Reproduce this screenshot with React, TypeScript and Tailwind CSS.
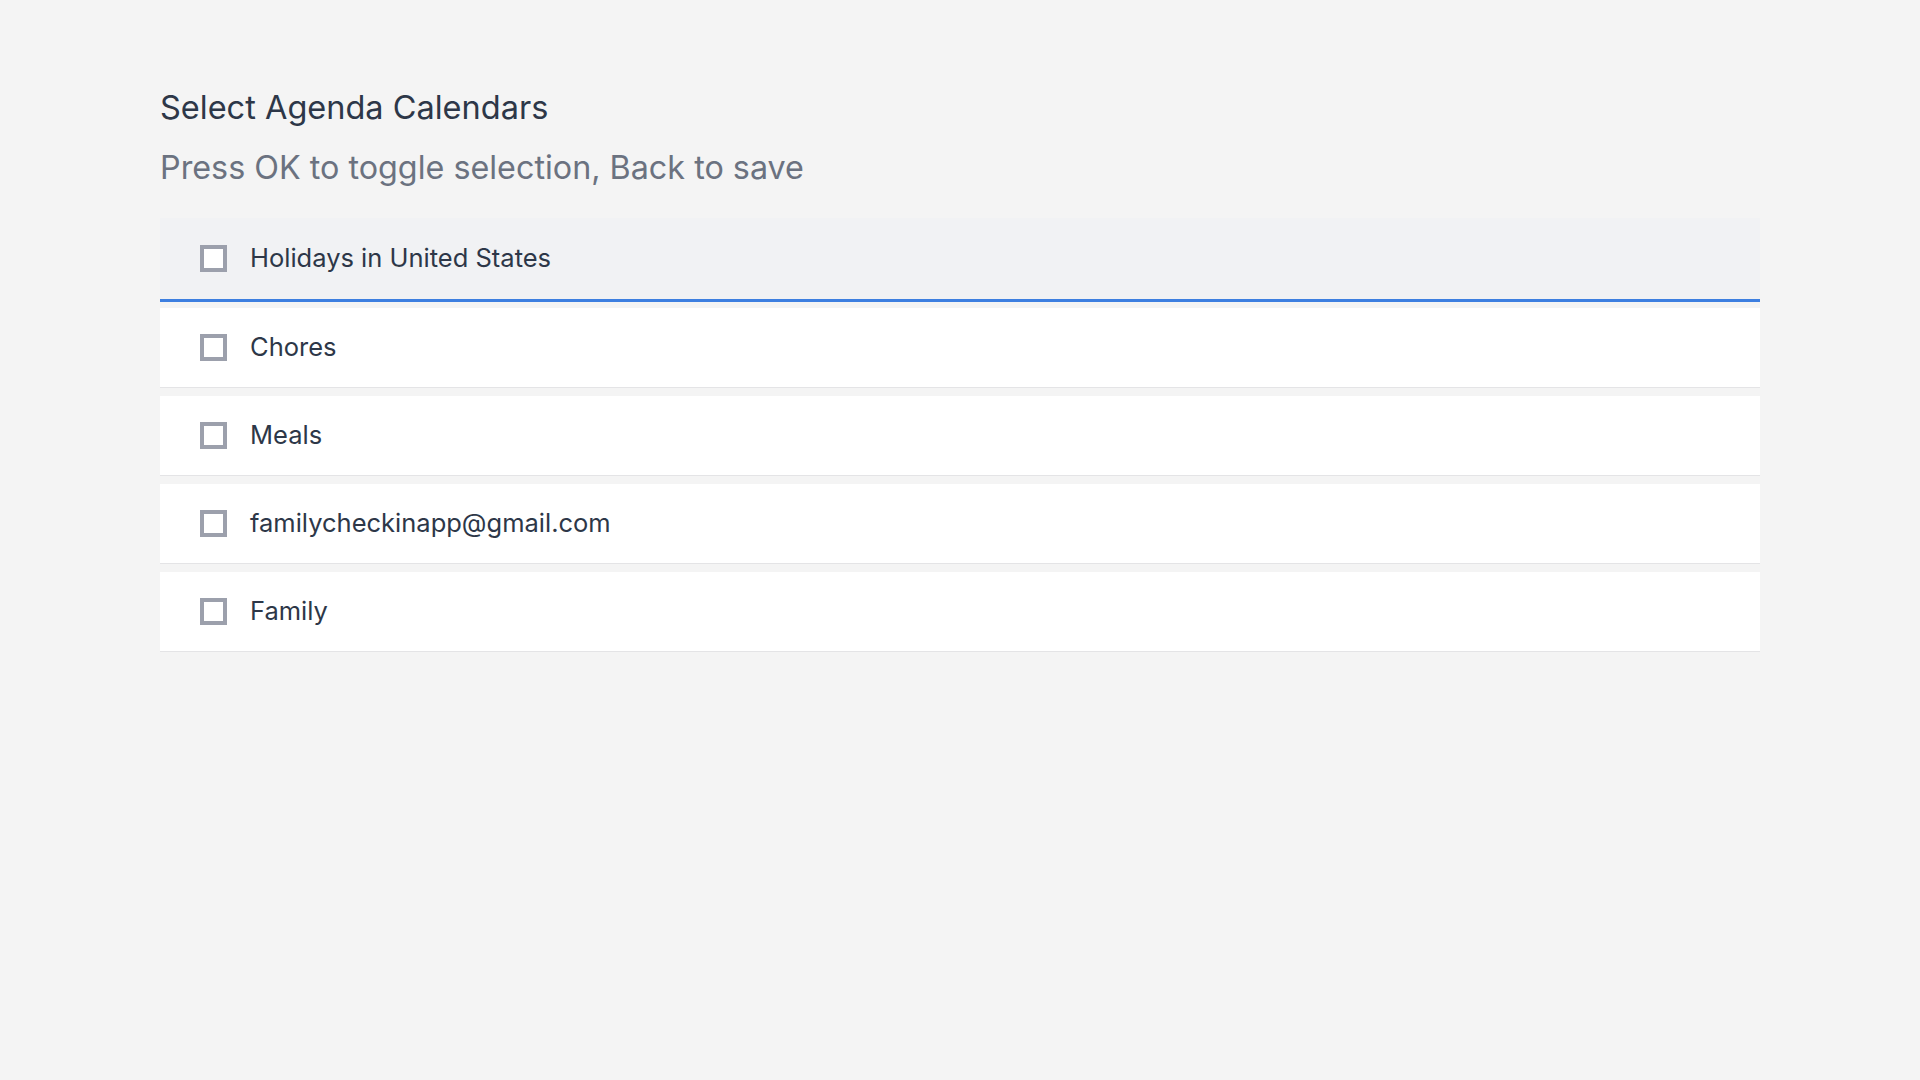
const calendars = [
  "Holidays in United States",
  "Chores",
  "Meals",
  "familycheckinapp@gmail.com",
  "Family",
];

export default function App() {
  return (
    <div className="min-h-screen w-full bg-[#f4f4f4] font-['Inter',sans-serif]">
      <div className="px-[160px] pt-[88px]">
        <h1 className="text-[32.5px] leading-[40px] text-[#2d3748]">Select Agenda Calendars</h1>
        <p className="mt-[20px] text-[32.3px] leading-[40px] text-[#6b7280]">
          Press OK to toggle selection, Back to save
        </p>

        <div className="mt-[30px] flex flex-col">
          {calendars.map((name, i) => {
            const focused = i === 0;
            return (
              <div
                key={name}
                className={
                  focused
                    ? "mb-[6px] flex h-[84px] items-center gap-[23px] border-b-[3px] border-[#3d7fe0] bg-[#f1f2f4] pl-[40px]"
                    : "mb-[8px] flex h-[80px] items-center gap-[23px] border-b border-[#e4e4e6] bg-white pl-[40px]"
                }
              >
                <div className="h-[27px] w-[27px] shrink-0 border-[4px] border-[#9ca0ac] bg-white" />
                <span className="pb-[2px] text-[25.5px] leading-none text-[#2d3748]">{name}</span>
              </div>
            );
          })}
        </div>
      </div>
    </div>
  );
}
